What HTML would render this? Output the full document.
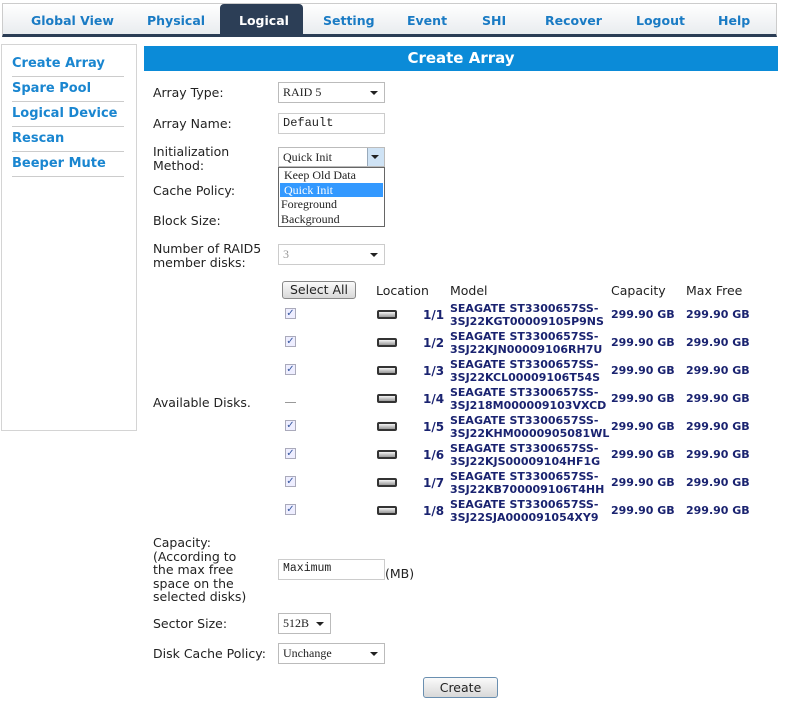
<!DOCTYPE html>
<html><head><meta charset="utf-8"><style>
*{margin:0;padding:0;box-sizing:border-box}
body{width:811px;height:713px;background:#fff;position:relative;overflow:hidden;font-family:"DejaVu Sans","Liberation Sans",sans-serif;font-size:12px;color:#222}
.a{position:absolute;white-space:nowrap}
#nav{left:2px;top:3px;width:775px;height:34px;border:1px solid #ccc;border-bottom:3px solid #2b3d55;background:linear-gradient(#fff,#e9ecef)}
.nv{position:absolute;top:13px;font-weight:bold;color:#1a7bc4;font-size:12.5px;font-family:"DejaVu Sans",sans-serif}
#lt{left:220px;top:4px;width:83px;height:33px;background:#2c3e56;border-radius:4px 4px 0 0}
#side{left:1px;top:44px;width:136px;height:387px;border:1px solid #d4d4d4}
.si{position:absolute;left:12px;width:112px;font-weight:bold;color:#1a86d0;font-size:13px;border-bottom:1px solid #ccc;height:25px;padding-top:4px}
#hdr{left:144px;top:46px;width:634px;height:25px;background:#0b8bd8;color:#fff;font-weight:bold;font-size:15px;text-align:center;line-height:25px}
.lb{position:absolute;left:153px;font-size:12.5px;line-height:14px;color:#222}
.sel{position:absolute;border:1px solid #bbb;background:#fff;font-family:"Liberation Serif",serif;font-size:12px;padding:2px 4px;height:21px}
.sel:after{content:"";position:absolute;right:6px;top:8px;border:4px solid transparent;border-top:4px solid #222;border-bottom:0}
.sel.n:after{display:none}
.cb{position:absolute;left:285px;width:11px;height:11px;border:1px solid #aab;background:#eef;font-size:10px;font-weight:bold;color:#3a5aa0;line-height:10px;text-align:center}
.hd{position:absolute;width:20px;height:9px;left:377px;border:2px solid #333;border-radius:2px;background:linear-gradient(#f4f4f4,#999)}
.loc{position:absolute;left:423px;font-weight:bold;color:#1a2370;font-size:12px}
.md{position:absolute;left:450px;font-weight:bold;color:#1a2370;font-size:11px;line-height:13px}
.cp{position:absolute;font-weight:bold;color:#1a2370;font-size:11px}
.btn{position:absolute;border:1px solid #888;border-radius:3px;background:linear-gradient(#fafafa,#d8d8d8);text-align:center;font-size:12.5px}
</style></head><body>
<div id="nav" class="a"></div>
<div id="lt" class="a"></div>
<div class="nv" style="left:31px">Global View</div>
<div class="nv" style="left:147px">Physical</div>
<div class="nv" style="left:239px;color:#fff">Logical</div>
<div class="nv" style="left:323px">Setting</div>
<div class="nv" style="left:407px">Event</div>
<div class="nv" style="left:482px">SHI</div>
<div class="nv" style="left:545px">Recover</div>
<div class="nv" style="left:636px">Logout</div>
<div class="nv" style="left:718px">Help</div>

<div id="side" class="a"></div>
<div class="si" style="top:52px">Create Array</div>
<div class="si" style="top:77px">Spare Pool</div>
<div class="si" style="top:102px">Logical Device</div>
<div class="si" style="top:127px">Rescan</div>
<div class="si" style="top:152px">Beeper Mute</div>

<div id="hdr" class="a">Create Array</div>

<div class="lb" style="top:86px">Array Type:</div>
<div class="sel" style="left:278px;top:82px;width:107px">RAID 5</div>
<div class="lb" style="top:117px">Array Name:</div>
<div class="sel n" style="left:278px;top:113px;width:107px;font-family:'Liberation Mono',monospace;font-size:12px;border-color:#ccc">Default</div>
<div class="lb" style="top:145px">Initialization<br>Method:</div>
<div class="sel" style="left:278px;top:147px;width:107px;height:20px;padding-top:2px">Quick Init</div>
<div class="a" style="left:367px;top:148px;width:17px;height:18px;background:#cfe3f5;border-left:1px solid #9ab"></div>
<div class="a" style="left:371px;top:155px;border:4px solid transparent;border-top:4px solid #222;border-bottom:0;width:0"></div>
<div class="a" style="left:278px;top:167px;width:107px;height:60px;border:1px solid #666;background:#fff;font-family:'Liberation Serif',serif;font-size:12px;line-height:14.5px">
<div style="padding-left:5px">Keep Old Data</div>
<div style="background:#3399ff;color:#fff;padding-left:4px;margin:0 1px">Quick Init</div>
<div style="padding-left:2px">Foreground</div>
<div style="padding-left:2px">Background</div>
</div>
<div class="lb" style="top:184px">Cache Policy:</div>
<div class="lb" style="top:214px">Block Size:</div>
<div class="lb" style="top:242px">Number of RAID5<br>member disks:</div>
<div class="sel" style="left:278px;top:244px;width:107px;color:#999;border-color:#ccc">3</div>

<div class="btn" style="left:282px;top:281px;width:74px;height:18px;line-height:16px">Select All</div>
<div class="a" style="left:376px;top:283px;font-size:12.5px">Location</div>
<div class="a" style="left:450px;top:283px;font-size:12.5px">Model</div>
<div class="a" style="left:611px;top:283px;font-size:12.5px">Capacity</div>
<div class="a" style="left:686px;top:283px;font-size:12.5px">Max Free</div>

<div class="lb" style="top:396px">Available Disks.</div>

<div class="cb" style="top:308px">✓</div><div class="hd" style="top:310px"></div><div class="loc" style="top:308px">1/1</div><div class="md" style="top:302px">SEAGATE ST3300657SS-<br>3SJ22KGT00009105P9NS</div><div class="cp" style="left:611px;top:308px">299.90 GB</div><div class="cp" style="left:686px;top:308px">299.90 GB</div>
<div class="cb" style="top:336px">✓</div><div class="hd" style="top:338px"></div><div class="loc" style="top:336px">1/2</div><div class="md" style="top:330px">SEAGATE ST3300657SS-<br>3SJ22KJN00009106RH7U</div><div class="cp" style="left:611px;top:336px">299.90 GB</div><div class="cp" style="left:686px;top:336px">299.90 GB</div>
<div class="cb" style="top:364px">✓</div><div class="hd" style="top:366px"></div><div class="loc" style="top:364px">1/3</div><div class="md" style="top:358px">SEAGATE ST3300657SS-<br>3SJ22KCL00009106T54S</div><div class="cp" style="left:611px;top:364px">299.90 GB</div><div class="cp" style="left:686px;top:364px">299.90 GB</div>
<div class="a" style="left:285px;top:402px;width:11px;height:1px;background:#999"></div><div class="hd" style="top:394px"></div><div class="loc" style="top:392px">1/4</div><div class="md" style="top:386px">SEAGATE ST3300657SS-<br>3SJ218M000009103VXCD</div><div class="cp" style="left:611px;top:392px">299.90 GB</div><div class="cp" style="left:686px;top:392px">299.90 GB</div>
<div class="cb" style="top:420px">✓</div><div class="hd" style="top:422px"></div><div class="loc" style="top:420px">1/5</div><div class="md" style="top:414px">SEAGATE ST3300657SS-<br>3SJ22KHM0000905081WL</div><div class="cp" style="left:611px;top:420px">299.90 GB</div><div class="cp" style="left:686px;top:420px">299.90 GB</div>
<div class="cb" style="top:448px">✓</div><div class="hd" style="top:450px"></div><div class="loc" style="top:448px">1/6</div><div class="md" style="top:442px">SEAGATE ST3300657SS-<br>3SJ22KJS00009104HF1G</div><div class="cp" style="left:611px;top:448px">299.90 GB</div><div class="cp" style="left:686px;top:448px">299.90 GB</div>
<div class="cb" style="top:476px">✓</div><div class="hd" style="top:478px"></div><div class="loc" style="top:476px">1/7</div><div class="md" style="top:470px">SEAGATE ST3300657SS-<br>3SJ22KB700009106T4HH</div><div class="cp" style="left:611px;top:476px">299.90 GB</div><div class="cp" style="left:686px;top:476px">299.90 GB</div>
<div class="cb" style="top:504px">✓</div><div class="hd" style="top:506px"></div><div class="loc" style="top:504px">1/8</div><div class="md" style="top:498px">SEAGATE ST3300657SS-<br>3SJ22SJA000091054XY9</div><div class="cp" style="left:611px;top:504px">299.90 GB</div><div class="cp" style="left:686px;top:504px">299.90 GB</div>

<div class="lb" style="top:536px;line-height:13.5px">Capacity:<br>(According to<br>the max free<br>space on the<br>selected disks)</div>
<div class="sel n" style="left:278px;top:559px;width:107px;font-family:'Liberation Mono',monospace;font-size:11.5px;border-color:#ccc">Maximum</div>
<div class="a" style="left:385px;top:566px;font-size:12.5px">(MB)</div>
<div class="lb" style="top:617px">Sector Size:</div>
<div class="sel" style="left:278px;top:613px;width:53px">512B</div>
<div class="lb" style="top:647px">Disk Cache Policy:</div>
<div class="sel" style="left:278px;top:643px;width:107px">Unchange</div>
<div class="btn" style="left:423px;top:677px;width:75px;height:21px;line-height:19px;border-color:#6a8fb0">Create</div>
</body></html>
